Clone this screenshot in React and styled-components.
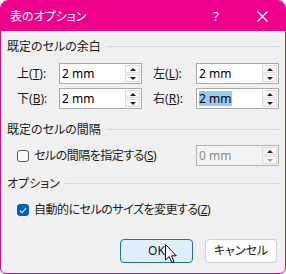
import React from "react";
import styled, { createGlobalStyle } from "styled-components";

const Global = createGlobalStyle`
  html, body { margin: 0; padding: 0; background: #ffffff; }
  body {
    font-family: "Noto Sans", "Noto Sans CJK JP", sans-serif;
    font-size: 12px;
    color: #1a1a1a;
    font-feature-settings: "palt";
  }
`;

const PINK = "#ec008c";

const Window = styled.div`
  position: relative;
  width: 286px;
  height: 274px;
  box-sizing: border-box;
  border: 1px solid ${PINK};
  border-radius: 8px 8px 6px 6px;
  overflow: hidden;
  background: #f0f0f0;
  display: flex;
  flex-direction: column;
`;

const TitleBar = styled.div`
  height: 30px;
  flex: none;
  background: ${PINK};
  color: #ffffff;
  display: flex;
  align-items: center;
  padding-left: 9px;
`;

const Title = styled.div`
  flex: 1;
  font-size: 12px;
  line-height: 16px;
  padding-top: 1px;
`;

const CaptionButton = styled.div`
  width: 46px;
  height: 30px;
  display: flex;
  align-items: center;
  justify-content: center;
  font-size: 13px;
  color: #ffffff;
`;

const Body = styled.div`
  flex: 1;
  padding: 8px 6px 0;
  display: flex;
  flex-direction: column;
`;

const SectionHeader = styled.div`
  height: 16px;
  display: flex;
  align-items: center;
  gap: 5px;
  margin-top: ${(p) => p.$mt || 0}px;
  line-height: 16px;
`;

const Rule = styled.div`
  flex: 1;
  height: 1px;
  background: #d9d9d9;
  margin-top: -1px;
`;

const Grid = styled.div`
  margin-top: 8px;
  padding-left: 10px;
  display: grid;
  grid-template-columns: 125px 126px;
  column-gap: 11px;
  row-gap: 4px;
`;

const Pair = styled.div`
  display: flex;
  align-items: center;
  height: 21px;
`;

const Label = styled.label`
  width: ${(p) => p.$w}px;
  flex: none;
  line-height: 16px;
`;

const SpinBox = styled.div`
  width: 83px;
  height: 21px;
  box-sizing: border-box;
  border: 1px solid ${(p) => (p.$disabled ? "#b4b4b4" : "#a9a9a9")};
  background: ${(p) => (p.$disabled ? "#f3f3f3" : "#ffffff")};
  display: flex;
  flex: none;
`;

const Value = styled.div`
  flex: 1;
  padding-left: 2px;
  display: flex;
  align-items: center;
  color: ${(p) => (p.$disabled ? "#8a8a8a" : "#000000")};
  line-height: 15px;
`;

const Selected = styled.span`
  background: #99c9ef;
  padding: 0 1px 0 0;
`;

const Spinner = styled.div`
  width: 15px;
  margin: 1px 1px 1px 0;
  display: flex;
  flex-direction: column;
  gap: 1px;
`;

const SpinButton = styled.div`
  flex: 1;
  background: #f7f7f7;
  border: 1px solid #dcdcdc;
  display: flex;
  align-items: center;
  justify-content: center;
  &::before {
    content: "";
    width: 0;
    height: 0;
    border-left: 3px solid transparent;
    border-right: 3px solid transparent;
    ${(p) =>
      p.$up
        ? `border-bottom: 3px solid ${p.$dim ? "#a0a0a0" : "#202020"};`
        : `border-top: 3px solid ${p.$dim ? "#a0a0a0" : "#202020"};`}
  }
`;

const CheckRow = styled.div`
  margin-top: ${(p) => p.$mt}px;
  padding-left: 10px;
  height: ${(p) => p.$h}px;
  display: flex;
  align-items: center;
  justify-content: space-between;
`;

const CheckLabel = styled.div`
  display: flex;
  align-items: center;
  gap: 5px;
  line-height: 16px;
  letter-spacing: -0.5px;
`;

const Box = styled.div`
  width: 12px;
  height: 12px;
  box-sizing: border-box;
  border-radius: 3px;
  border: 1px solid ${(p) => (p.$checked ? "#005fb8" : "#5c5c5c")};
  background: ${(p) => (p.$checked ? "#005fb8" : "#fbfbfb")};
  display: flex;
  align-items: center;
  justify-content: center;
`;

const Buttons = styled.div`
  margin-top: 21px;
  display: flex;
  justify-content: flex-end;
  gap: 12px;
  padding-right: 2px;
`;

const Button = styled.div`
  width: ${(p) => p.$w}px;
  height: 24px;
  box-sizing: border-box;
  border-radius: 4px;
  border: 1px solid ${(p) => (p.$primary ? "#1a6fc0" : "#d0d0d0")};
  background: ${(p) => (p.$primary ? "#e0eef9" : "#fdfdfd")};
  display: flex;
  align-items: center;
  justify-content: center;
  line-height: 16px;
  color: #1a1a1a;
`;

const Cursor = styled.svg`
  position: absolute;
  left: 164px;
  top: 243px;
  pointer-events: none;
`;

function Spin({ value, disabled, selected }) {
  return (
    <SpinBox $disabled={disabled}>
      <Value $disabled={disabled}>
        {selected ? <Selected>{value}</Selected> : value}
      </Value>
      <Spinner>
        <SpinButton $up />
        <SpinButton $dim={disabled} />
      </Spinner>
    </SpinBox>
  );
}

function Field({ label, letter, w, value, selected }) {
  return (
    <Pair>
      <Label $w={w}>
        {label}(<u>{letter}</u>):
      </Label>
      <Spin value={value} selected={selected} />
    </Pair>
  );
}

export default function App() {
  return (
    <>
      <Global />
      <Window>
        <TitleBar>
          <Title>表のオプション</Title>
          <CaptionButton>?</CaptionButton>
          <CaptionButton>
            <svg width="11" height="11" viewBox="0 0 11 11">
              <path d="M0.5 0.5 L10.5 10.5 M10.5 0.5 L0.5 10.5" stroke="#ffffff" strokeWidth="1.1" fill="none" />
            </svg>
          </CaptionButton>
        </TitleBar>
        <Body>
          <SectionHeader>
            <span>既定のセルの余白</span>
            <Rule />
          </SectionHeader>
          <Grid>
            <Field label="上" letter="T" w={42} value="2 mm" />
            <Field label="左" letter="L" w={43} value="2 mm" />
            <Field label="下" letter="B" w={42} value="2 mm" />
            <Field label="右" letter="R" w={43} value="2 mm" selected />
          </Grid>
          <SectionHeader $mt={13}>
            <span>既定のセルの間隔</span>
            <Rule />
          </SectionHeader>
          <CheckRow $mt={7} $h={21}>
            <CheckLabel>
              <Box />
              <span>
                セルの間隔を指定する(<u>S</u>)
              </span>
            </CheckLabel>
            <Spin value="0 mm" disabled />
          </CheckRow>
          <SectionHeader $mt={10}>
            <span>オプション</span>
            <Rule />
          </SectionHeader>
          <CheckRow $mt={10} $h={16}>
            <CheckLabel>
              <Box $checked>
                <svg width="8" height="7" viewBox="0 0 8 7">
                  <path d="M0.8 3.6 L3 5.8 L7.2 1" stroke="#ffffff" strokeWidth="1.1" fill="none" />
                </svg>
              </Box>
              <span>
                自動的にセルのサイズを変更する(<u>Z</u>)
              </span>
            </CheckLabel>
          </CheckRow>
          <Buttons>
            <Button $primary $w={73}>OK</Button>
            <Button $w={72}>キャンセル</Button>
          </Buttons>
        </Body>
        <Cursor width="13" height="20" viewBox="0 0 13 20">
          <path
            d="M0.5 0.5 L0.5 16 L4.2 12.6 L6.8 18.6 L9 17.6 L6.5 11.8 L11.3 11.8 Z"
            fill="#ffffff"
            stroke="#000000"
            strokeWidth="1"
            strokeLinejoin="miter"
          />
        </Cursor>
      </Window>
    </>
  );
}
